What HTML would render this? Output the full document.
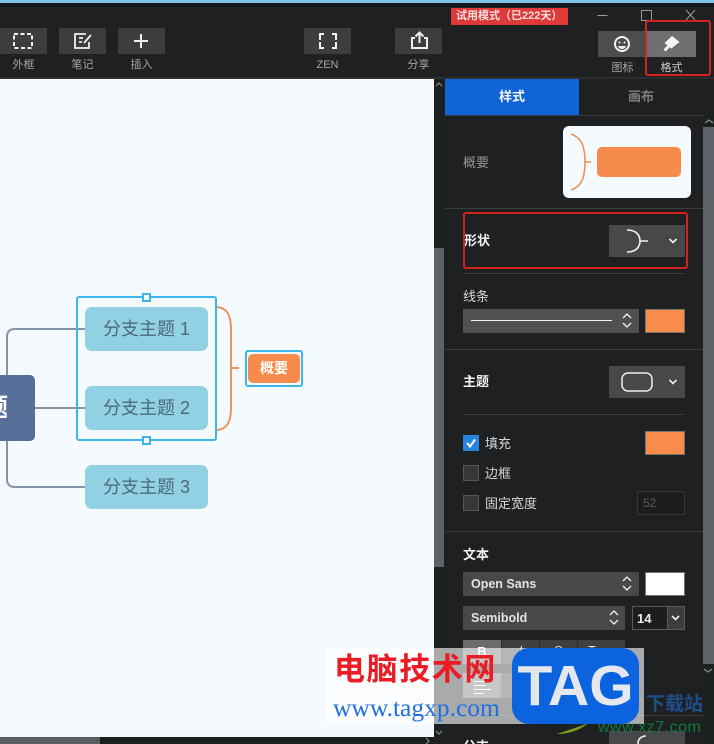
<!DOCTYPE html>
<html lang="zh"><head><meta charset="utf-8"><title>格式</title>
<style>
html,body{margin:0;padding:0;background:#1e2022}
#p{position:relative;width:714px;height:744px;overflow:hidden;background:#1e2022;font-family:"Liberation Sans","Noto Sans CJK SC",sans-serif;color:#e8e8e8}
#p div{position:absolute;box-sizing:border-box}
.tb{height:26px;width:47px;top:28px;background:#3b3d3e}
.tl{top:58px;height:14px;line-height:14px;font-size:11px;color:#a4a6a6;text-align:center;width:47px}
.sep{height:1px;background:#3a3c3d}
.lab{font-size:13px;line-height:18px;height:18px;color:#d8d8d8;white-space:nowrap}
.b{font-weight:700;color:#f2f2f2}
.sel{background:#464849}
.sw{background:#f98c4c;border:1px solid #77726c}
.cb{width:16px;height:16px;background:#353738;border:1px solid #545657}
.t{background:#92d0e4;border-radius:7px;left:85px;width:123px;height:44px;line-height:44px;text-align:center;font-size:18px;color:#4b6a7c}
.st{font-size:12.500px;font-weight:700;line-height:24px;color:#e4e4e4;padding-left:8px}
svg{position:absolute;overflow:visible}
</style></head><body>
<div id="p">
<div style="left:0;top:0;width:714px;height:3px;background:#7fc3e8"></div>
<div style="left:0;top:3px;width:714px;height:4px;background:#15181a"></div>
<div style="left:0;top:77px;width:714px;height:2px;background:#2b2d2e"></div>

<div class="tb" style="left:0"></div><div class="tl" style="left:0">外框</div>
<div class="tb" style="left:59px"></div><div class="tl" style="left:59px">笔记</div>
<div class="tb" style="left:118px"></div><div class="tl" style="left:118px">插入</div>
<div class="tb" style="left:304px"></div><div class="tl" style="left:304px">ZEN</div>
<div class="tb" style="left:395px"></div><div class="tl" style="left:395px">分享</div>
<svg style="left:0;top:0" width="714" height="80" fill="none" stroke="#f0f0f0" stroke-width="2">
<rect x="14" y="34" width="18" height="14" stroke-dasharray="4 2.5"/>
<path d="M86 34H75v14h14v-6M79 38h4M79 42h3M84 43l7-8" stroke-width="1.800"/>
<path d="M141 34v14M134 41h14" stroke-width="2"/>
<path d="M320 40v-6h4M332 34h4v6M336 42v6h-4M324 48h-4v-6" stroke-width="2"/>
<path d="M415 38h-3v10h15v-10h-3M419.500 43V33M415.500 36.500l4-4 4 4" stroke-width="2"/>
</svg>

<div style="left:451px;top:8px;width:117px;height:17px;background:#df3a3a;color:#f5dede;font-size:11px;font-weight:700;line-height:17px;padding-left:5px;white-space:nowrap">试用模式（已222天）</div>
<svg style="left:0;top:0" width="714" height="80" fill="none" stroke="#9a9c9c" stroke-width="1">
<path d="M597.500 15.500h10M641.500 10.500h10v10h-10zM686 10l9 10M695 10l-9 10"/>
</svg>
<div style="left:598px;top:31px;width:47px;height:26px;background:#4b4d4e"></div>
<div style="left:645px;top:31px;width:51px;height:26px;background:#6e7070"></div>
<svg style="left:0;top:0" width="714" height="80" fill="none">
<circle cx="622" cy="44" r="7" stroke="#f2f2f2" stroke-width="2"/>
<circle cx="619.500" cy="42.500" r="1" fill="#f2f2f2"/><circle cx="624.500" cy="42.500" r="1" fill="#f2f2f2"/>
<path d="M618 46h8q-1 3-4 3t-4-3z" fill="#f2f2f2"/>
<path d="M672 36l7.500 6-8 6.500-7-5.500z" fill="#f4f4f4"/>
<path d="M669 46l-4.500 4.500" stroke="#f4f4f4" stroke-width="3"/>
</svg>
<div class="tl" style="left:599px;top:61px">图标</div>
<div class="tl" style="left:648px;top:61px;color:#d0d0d0">格式</div>
<div style="left:645px;top:20px;width:66px;height:56px;border:2.500px solid #d3231f;border-radius:3px"></div>

<div style="left:0;top:79px;width:434px;height:658px;background:#f5faff"></div>
<svg style="left:0;top:0" width="434" height="737" fill="none">
<path d="M85 329H15q-8 0-8 8V375M7 441V479q0 8 8 8H85M35 408H85" stroke="#8495a8" stroke-width="2"/>
<path d="M217 307c10 1 14 8 14 22v79c0 14-4 21-14 22M231 368h8" stroke="#f0935a" stroke-width="2"/>
</svg>
<div style="left:-40px;top:375px;width:75px;height:66px;background:#56709a;border-radius:5px;overflow:hidden;color:#fff;font-size:25px;font-weight:700;line-height:66px;text-align:right;padding-right:27px;white-space:nowrap"><span style="position:relative;left:0">题</span></div>
<div class="t" style="top:307px">分支主题 1</div>
<div class="t" style="top:386px">分支主题 2</div>
<div class="t" style="top:465px">分支主题 3</div>
<div style="left:76px;top:296px;width:141px;height:145px;border:2px solid #3fb6e8;border-radius:3px"></div>
<div style="left:142px;top:293px;width:9px;height:9px;background:#f5faff;border:2px solid #3fb6e8"></div>
<div style="left:142px;top:436px;width:9px;height:9px;background:#f5faff;border:2px solid #3fb6e8"></div>
<div style="left:245px;top:350px;width:58px;height:37px;border:2px solid #3fb6e8;border-radius:3px"></div>
<div style="left:248px;top:354px;width:52px;height:29px;background:#f78b4b;border-radius:5px;color:#fff;font-size:14px;font-weight:700;line-height:29px;text-align:center">概要</div>
<div style="left:0;top:737px;width:434px;height:7px;background:#1c1f20"></div>
<div style="left:0;top:737px;width:100px;height:7px;background:#5a5d60"></div>

<div style="left:434px;top:79px;width:10px;height:658px;background:#1d2021"></div>
<div style="left:434px;top:248px;width:10px;height:319px;background:#5c6268"></div>
<div style="left:703px;top:115px;width:11px;height:629px;background:#1d2021"></div>
<div style="left:703px;top:127px;width:11px;height:537px;background:#5c6268"></div>
<svg style="left:0;top:0" width="714" height="744" fill="none" stroke="#8a8c8c" stroke-width="1.200">
<path d="M436 86l3-3 3 3M705 123l4-3 4 3M436 731l3 3 3-3M704 669l4 3 4-3M426 738l3 3-3 3"/>
</svg>

<div style="left:445px;top:79px;width:134px;height:36px;background:#0f64d8;color:#f2f6fc;font-size:13px;font-weight:700;line-height:36px;text-align:center">样式</div>
<div style="left:579px;top:79px;width:124px;height:36px;color:#7c7e7e;font-size:13px;font-weight:700;line-height:36px;text-align:center">画布</div>
<div class="sep" style="left:445px;top:115px;width:258px"></div>

<div class="lab" style="left:463px;top:154px;color:#929494">概要</div>
<div style="left:563px;top:126px;width:128px;height:72px;background:#f5faff;border-radius:6px"></div>
<div style="left:597px;top:147px;width:84px;height:30px;background:#f78b4b;border-radius:5px"></div>
<svg style="left:0;top:0" width="714" height="210" fill="none"><path d="M571 134c9 3 14 10 14 28s-5 25-14 28M585 162h6" stroke="#ef9058" stroke-width="1.600"/></svg>
<div class="sep" style="left:445px;top:208px;width:258px"></div>

<div class="lab b" style="left:464px;top:232px">形状</div>
<div class="sel" style="left:609px;top:225px;width:76px;height:32px"></div>
<div style="left:463px;top:212px;width:225px;height:57px;border:2.500px solid #d3231f;border-radius:3px"></div>
<div class="sep" style="left:463px;top:273px;width:222px"></div>
<div class="lab" style="left:463px;top:288px">线条</div>
<div class="sel" style="left:463px;top:309px;width:176px;height:24px;background:#4e5051"></div>
<div class="sw" style="left:645px;top:309px;width:40px;height:24px"></div>
<div class="sep" style="left:445px;top:349px;width:258px"></div>

<div class="lab b" style="left:463px;top:373px">主题</div>
<div class="sel" style="left:609px;top:366px;width:76px;height:32px"></div>
<div class="sep" style="left:463px;top:414px;width:222px"></div>

<div style="left:463px;top:435px;width:16px;height:16px;background:#2585e0"></div>
<svg style="left:0;top:0" width="714" height="744" fill="none"><path d="M467 443l3 3.500 5-7" stroke="#fff" stroke-width="2"/></svg>
<div class="lab" style="left:485px;top:435px">填充</div>
<div class="sw" style="left:645px;top:431px;width:40px;height:24px"></div>
<div class="cb" style="left:463px;top:465px"></div>
<div class="lab" style="left:485px;top:465px">边框</div>
<div class="cb" style="left:463px;top:495px"></div>
<div class="lab" style="left:485px;top:495px">固定宽度</div>
<div style="left:637px;top:491px;width:48px;height:24px;border:1px solid #353738;background:#1b1d1e;color:#56585a;font-size:12px;line-height:23px;padding-left:5px">52</div>
<div class="sep" style="left:445px;top:531px;width:258px"></div>

<div class="lab b" style="left:463px;top:546px">文本</div>
<div class="sel st" style="left:463px;top:572px;width:176px;height:24px">Open Sans</div>
<div style="left:645px;top:572px;width:40px;height:24px;background:#fff;border:1px solid #77726c"></div>
<div class="sel st" style="left:463px;top:606px;width:162px;height:24px">Semibold</div>
<div style="left:632px;top:606px;width:53px;height:24px;border:1px solid #585a5b;background:#1b1d1e;color:#eee;font-size:13px;font-weight:700;line-height:23px;padding-left:4px">14</div>
<div style="left:667px;top:606px;width:18px;height:24px;background:#3b3d3e;border:1px solid #585a5b"></div>

<svg style="left:0;top:0" width="714" height="744" fill="none" stroke="#f2f2f2">
<path d="M627 230c9 0 13 5 13 11s-4 11-13 11M640 241h8" stroke-width="1.600"/>
<path d="M669.500 239l3.500 3.500 3.500-3.500M669.500 380l3.500 3.500 3.500-3.500M672 616l3.500 3.500 3.500-3.500" stroke-width="1.600"/>
<path d="M623 318l4-4 4 4M623 323l4 4 4-4M623 581l4-4 4 4M623 586l4 4 4-4M610 615l4-4 4 4M610 620l4 4 4-4" stroke-width="1.300"/>
<path d="M471 320.500h141" stroke-width="1"/>
<rect x="622" y="373" width="30" height="18" rx="6" stroke="#eee" stroke-width="1.500"/>
</svg>

<div style="left:463px;top:640px;width:38px;height:24px;background:#6a6c6d;color:#fff;font-size:13px;font-weight:700;line-height:24px;text-align:center">B</div>
<div style="left:501px;top:640px;width:38px;height:24px;background:#3e4041;border-left:1px solid #2a2c2d;color:#ddd;font-size:13px;font-style:italic;line-height:22px;text-align:center">I</div>
<div style="left:539px;top:640px;width:38px;height:24px;background:#3e4041;border-left:1px solid #2a2c2d;color:#ddd;font-size:13px;line-height:22px;text-align:center;text-decoration:line-through">S</div>
<div style="left:577px;top:640px;width:48px;height:24px;background:#3e4041;border-left:1px solid #2a2c2d;color:#ddd;font-size:13px;line-height:22px;padding-left:10px">Tт</div>
<div style="left:463px;top:673px;width:38px;height:25px;background:#6a6c6d"></div>
<div style="left:501px;top:673px;width:77px;height:25px;background:#3e4041"></div>
<div class="sep" style="left:445px;top:715px;width:258px"></div>
<div class="lab b" style="left:463px;top:738px">分支</div>
<div class="sel" style="left:609px;top:731px;width:76px;height:13px"></div>
<svg style="left:0;top:0" width="714" height="744" fill="none"><path d="M646 736c-5 0-8 3-8 8" stroke="#eee" stroke-width="1.600"/>
<path d="M557 734c12 0 24-4 31-11-6 3-20 7-31 11z" fill="#7d9a1e"/></svg>

<div style="left:326px;top:648px;width:108px;height:76px;background:#fbfdff"></div>
<div style="left:434px;top:648px;width:210px;height:76px;background:rgba(255,255,255,.62)"></div>
<svg style="left:0;top:0" width="714" height="744" fill="none" stroke="#fff" stroke-width="1">
<path d="M474 681.500h17M474 685.500h12M474 689.500h17M474 693.500h10"/>
</svg>
<div style="left:334px;top:653px;font-size:31px;line-height:34px;font-weight:700;color:#ec1c24;white-space:nowrap;letter-spacing:1.600px">电脑技术网</div>
<div style="left:333px;top:694px;font-family:'Liberation Serif',serif;font-size:25.500px;line-height:28px;color:#1f6fe0;white-space:nowrap">www.tagxp.com</div>
<div style="left:646px;top:693px;font-size:19px;line-height:24px;font-weight:700;color:#1c4f8c;white-space:nowrap">下载站</div>
<div style="left:598px;top:718px;font-size:16px;line-height:20px;color:#0f7a3a;white-space:nowrap;letter-spacing:.5px">www.xz7.com</div>
<div style="left:512px;top:648px;width:127px;height:76px;background:#0b63e0;border-radius:17px;color:#e4e8ee;font-size:57px;font-weight:700;line-height:76px;text-align:center">TAG</div>
</div>
</body></html>
